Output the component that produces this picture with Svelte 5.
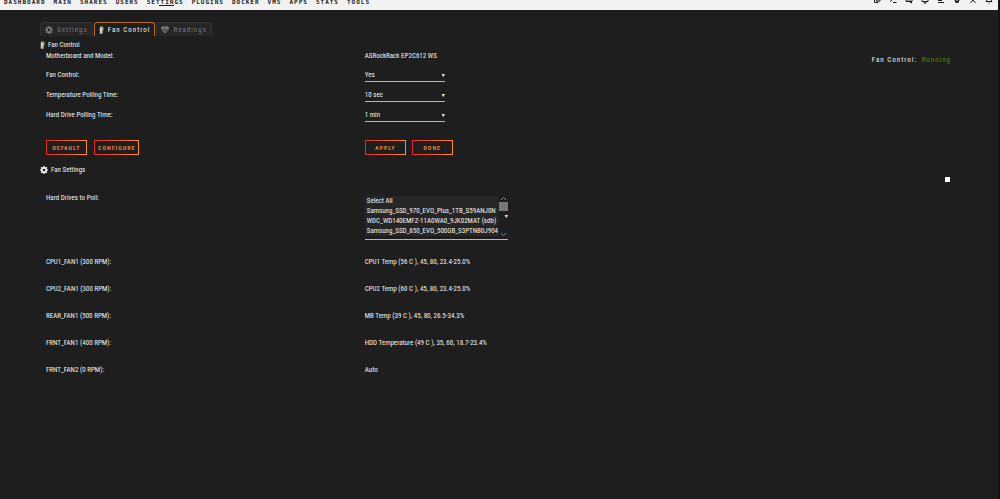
<script lang="ts">
	const menu = ['Dashboard', 'Main', 'Shares', 'Users', 'Settings', 'Plugins', 'Docker', 'VMs', 'Apps', 'Stats', 'Tools'];

	const tools = [
		{ name: 'Log out', path: 'M7 2h7v8H7zM7 5H3v8h7v-3M9 5h3M9 7h3' },
		{ name: 'Terminal', path: 'M2 3l5 4-5 4M8 13h7' },
		{ name: 'Feedback', path: 'M2 3h12v8H2zM5 6h6M5 8h6M9 11l4 3v-3' },
		{ name: 'Info', path: 'M2 2h12v9H2zM5 14h6M8 11v3' },
		{ name: 'Log', path: 'M2 3h8M2 6h12M2 9h8M2 13h12' },
		{ name: 'Help', path: 'M8 4a4 4 0 1 0 .1 0zM4 7h3M9 7h3M4 9h3M9 9h3M4 11h3M9 11h3M5 13h6' },
		{ name: 'Tools', path: 'M3 2l10 12M13 2L3 14' },
		{ name: 'Notifications', path: 'M2 11h12l-2-3V4H4v4zM7 14h2' }
	];

	const gear =
		'M6.8 0h2.4l.5 2.2 1.4.6L13 1.600 14.500 3.100 13.200 5l.6 1.300 2.200.5v2.400l-2.200.5-.6 1.400 1.300 1.900-1.600 1.600-1.900-1.300-1.300.6L9.200 16H6.800l-.5-2.100-1.400-.6L3 14.500 1.500 13l1.300-1.900-.6-1.400L0 9.200V6.800l2.200-.5.6-1.400L1.500 3 3 1.500l1.900 1.300 1.400-.6zM8 5.300a2.700 2.700 0 1 0 0 5.400 2.700 2.700 0 0 0 0-5.400z';

	const drives = [
		'Select All',
		'Samsung_SSD_970_EVO_Plus_1TB_S59ANJ0N',
		'WDC_WD140EMFZ-11A0WA0_9JK02MAT (sdb)',
		'Samsung_SSD_850_EVO_500GB_S3PTNB0J904'
	];

	const fans = [
		{ name: 'CPU1_FAN1', rpm: 300, value: 'CPU1 Temp (56 C ), 45, 80, 23.4-25.0%' },
		{ name: 'CPU2_FAN1', rpm: 300, value: 'CPU2 Temp (60 C ), 45, 80, 23.4-25.0%' },
		{ name: 'REAR_FAN1', rpm: 500, value: 'MB Temp (39 C ), 45, 80, 26.5-34.3%' },
		{ name: 'FRNT_FAN1', rpm: 400, value: 'HDD Temperature (49 C ), 35, 60, 18.7-23.4%' },
		{ name: 'FRNT_FAN2', rpm: 0, value: 'Auto' }
	];

	let tab = $state('Fan Control');
	let control = $state('Yes');
	let tempPoll = $state('10 sec');
	let drivePoll = $state('1 min');
	let advanced = $state(false);
</script>

{#snippet gearIcon()}
	<svg viewBox="0 0 16 16"><path d={gear} fill="currentColor" fill-rule="evenodd" /></svg>
{/snippet}

{#snippet fanIcon()}
	<svg class="narrow" viewBox="0 0 12 20">
		<path d="M3 1h6l2 3v6l-2 2 1 5-3 3H3l-2-3 1-5-1-3z" fill="#b9b59c" />
		<path d="M3 2l3 4v6l-3 6z" fill="#f0ecd8" />
		<path d="M7 2l3 3-3 3zM7 12l2 4-2 2z" fill="#66675a" />
	</svg>
{/snippet}

<header>
	<nav>
		{#each menu as item}
			<a href="#{item}" class:current={item === 'Settings'}>{item}</a>
		{/each}
	</nav>
	<div class="tools">
		{#each tools as tool}
			<button aria-label={tool.name}>
				<svg viewBox="0 0 16 16"><path d={tool.path} fill="none" stroke="currentColor" stroke-width="2" /></svg>
			</button>
		{/each}
	</div>
</header>

<main>
	<div class="tabs">
		<button class:active={tab === 'Settings'} onclick={() => (tab = 'Settings')}>
			{@render gearIcon()}Settings
		</button>
		<button class:active={tab === 'Fan Control'} onclick={() => (tab = 'Fan Control')}>
			{@render fanIcon()}Fan Control
		</button>
		<button class:active={tab === 'Readings'} onclick={() => (tab = 'Readings')}>
			<svg viewBox="0 0 16 16">
				<path d="M8 15L1 8a4 4 0 0 1 7-6 4 4 0 0 1 7 6z" fill="currentColor" />
				<path d="M0 8h5l2-3 2 6 2-3h5" fill="none" stroke="#262626" stroke-width="1.500" />
			</svg>Readings
		</button>
	</div>

	<h2>{@render fanIcon()}Fan Control</h2>
	<form onsubmit={(e) => e.preventDefault()}>
		<div class="row model">
			<span>Motherboard and Model:</span>
			<span>ASRockRack EP2C612 WS</span>
			<span class="status">Fan Control: <b>Running</b></span>
		</div>
		<div class="row field">
			<label for="control">Fan Control:</label>
			<div class="select">
				<select id="control" bind:value={control}>
					<option>Yes</option>
					<option>No</option>
				</select>
			</div>
		</div>
		<div class="row field">
			<label for="temp">Temperature Polling Time:</label>
			<div class="select">
				<select id="temp" bind:value={tempPoll}>
					<option>10 sec</option>
					<option>30 sec</option>
				</select>
			</div>
		</div>
		<div class="row field">
			<label for="drive">Hard Drive Polling Time:</label>
			<div class="select">
				<select id="drive" bind:value={drivePoll}>
					<option>1 min</option>
					<option>5 min</option>
				</select>
			</div>
		</div>
		<div class="row actions">
			<div><button>Default</button><button>Configure</button></div>
			<div><button>Apply</button><button>Done</button></div>
		</div>
	</form>

	<h2>{@render gearIcon()}Fan Settings</h2>
	<div class="toggle">
		<input type="checkbox" aria-label="Advanced view" bind:checked={advanced} />
	</div>
	<div class="row drives">
		<label for="drives">Hard Drives to Poll:</label>
		<div class="list">
			<select id="drives" multiple size="4">
				{#each drives as drive}
					<option>{drive}</option>
				{/each}
			</select>
			<div class="scroll">
				<svg viewBox="0 0 9 7"><path d="M2 5l2.500-2.500L7 5" /></svg>
				<i></i>
				<svg viewBox="0 0 9 7"><path d="M2 2l2.500 2.500L7 2" /></svg>
			</div>
		</div>
	</div>
	{#each fans as fan}
		<div class="row fan">
			<span>{fan.name} ({fan.rpm} RPM):</span>
			<span>{fan.value}</span>
		</div>
	{/each}
</main>

<style>
	:global(body) {
		background: #1e1e1e;
		border-right: 2px solid #141414;
		min-height: 100vh;
	}

	:global(#app) {
		color: #f2f2f2;
		font: 7px/12px 'Roboto Condensed', Roboto, sans-serif;
	}

	header {
		display: flex;
		justify-content: space-between;
		height: 10px;
		overflow: hidden;
		background: #f2f2f2;
		color: #1c1b1b;
	}

	nav {
		display: flex;
		gap: 8px;
		margin: -4px 0 0 4px;
		font-family: 'DejaVu Sans Mono', monospace;
		font-size: 6px;
	}

	nav a {
		position: relative;
		color: inherit;
		font-weight: bold;
		letter-spacing: 1px;
		text-decoration: none;
		text-transform: uppercase;
	}

	nav a.current::after {
		content: '';
		position: absolute;
		left: 12px;
		right: 10px;
		top: 9px;
		height: 1px;
		background: #1c1b1b;
	}

	.tools {
		display: flex;
		gap: 8px;
		margin: -4px 5px 0 0;
	}

	button,
	select {
		color: inherit;
		font: inherit;
	}

	.tools button {
		width: 8px;
		height: 8px;
		padding: 0;
		border: none;
		background: none;
	}

	svg {
		display: block;
		width: 8px;
		height: 8px;
	}

	.narrow {
		width: 5px;
	}

	main {
		margin: 12px 47px 0 40px;
	}

	.tabs {
		display: flex;
		gap: 1px;
	}

	.tabs button {
		display: flex;
		align-items: center;
		gap: 4px;
		height: 14px;
		padding: 0 4px;
		border: 1px solid #333;
		border-bottom: none;
		border-radius: 3px 3px 0 0;
		background: #262626;
		color: #777;
		letter-spacing: 1px;
	}

	.tabs button.active {
		border-color: #b8691f;
		background: #1e1e1e;
		color: #f2f2f2;
	}

	h2 {
		display: flex;
		align-items: center;
		gap: 3px;
		height: 10px;
		margin: 4px 0 0;
		font-size: 7px;
		font-weight: normal;
	}

	.row {
		display: grid;
		grid-template-columns: 35% 1fr auto;
		column-gap: 2px;
		padding-left: 6px;
	}

	.model {
		height: 15px;
	}

	.status {
		align-self: end;
		letter-spacing: 1px;
		line-height: 10px;
	}

	.status b {
		margin-left: 2px;
		color: #4f8a10;
		font-weight: normal;
	}

	.field {
		height: 20px;
		align-items: center;
	}

	.select {
		position: relative;
		width: 80px;
	}

	.select::after,
	.list::after {
		content: '▾';
		position: absolute;
		right: 0;
		top: 1px;
		font-family: 'DejaVu Sans', sans-serif;
		font-size: 6px;
		pointer-events: none;
	}

	select {
		display: block;
		width: 100%;
		height: 14px;
		padding: 0;
		border: none;
		border-bottom: 1px solid #b5b5b5;
		border-radius: 0;
		background: transparent;
		appearance: none;
	}

	.actions {
		margin-top: 15px;
	}

	.actions div {
		display: flex;
		gap: 6px;
	}

	.actions div:first-child {
		gap: 7px;
	}

	.actions button {
		min-width: 41px;
		height: 15px;
		padding: 0 3px;
		border: 1px solid;
		border-image: linear-gradient(90deg, #e22828, #ff8c2f) 1;
		background: none;
		color: #e68033;
		font-size: 6px;
		font-weight: bold;
		letter-spacing: 1px;
		text-transform: uppercase;
	}

	form + h2 {
		margin-top: 10px;
	}

	.toggle {
		display: flex;
		justify-content: flex-end;
		margin-top: 2px;
	}

	.toggle input {
		width: 5px;
		height: 5px;
		margin: 0 1px;
		background: #fff;
		appearance: none;
	}

	.toggle input:checked {
		background: #ff8c2f;
	}

	.drives {
		margin: 10px 0 8px;
	}

	.list {
		position: relative;
		display: flex;
		width: 143px;
		margin-top: 3px;
		border-bottom: 1px solid #b5b5b5;
	}

	.list::after {
		top: 15px;
	}

	.list select {
		flex: 1;
		min-width: 0;
		height: 44px;
		padding-top: 1px;
		border: none;
		overflow: hidden;
		scrollbar-width: none;
	}

	.list option {
		min-height: 0;
		padding: 1px 2px;
		background: #262626;
	}

	.scroll {
		width: 9px;
	}

	.scroll svg {
		width: 9px;
		height: 7px;
		fill: none;
		stroke: #888;
	}

	.scroll i {
		display: block;
		height: 9px;
		margin-bottom: 20px;
		background: #777;
	}

	.fan {
		height: 27px;
		align-items: center;
	}
</style>
